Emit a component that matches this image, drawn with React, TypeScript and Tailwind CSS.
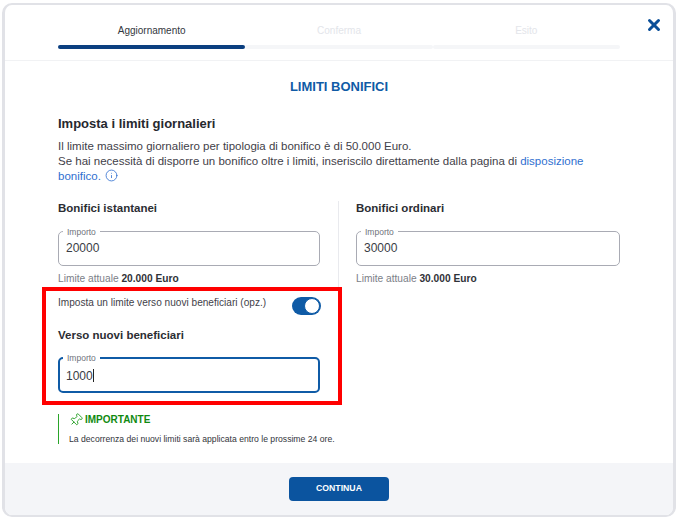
import { X, Pin, Info } from "lucide-react";

function Step({ label, active }: { label: string; active?: boolean }) {
  return (
    <div className="flex-1">
      <p className={`h-[24px] pt-[2px] text-center text-[10px] leading-[16px] ${active ? "text-[#333740]" : "text-[#e3e5ea]"}`}>
        {label}
      </p>
      <div className={`h-[4px] rounded-full ${active ? "bg-[#0b3f80]" : "bg-[#f5f6f8]"}`}></div>
    </div>
  );
}

function ImportoField({ value, focused }: { value: string; focused?: boolean }) {
  return (
    <div
      className={`relative rounded-[5px] bg-white ${
        focused ? "h-[36px] border-2 border-[#0f5ba6]" : "h-[35px] border border-[#a9abb4]"
      }`}
    >
      <span className={`absolute bg-white px-[4px] text-[8.5px] leading-[10px] text-[#6f727b] ${focused ? "-top-[6px] left-[3px]" : "-top-[5px] left-[4px]"}`}>
        Importo
      </span>
      <p className={`text-[12px] leading-[16px] text-[#3a3d45] ${focused ? "pl-[6px] pt-[8px]" : "pl-[7px] pt-[8px]"}`}>
        {value}
        {focused && <span className="ml-[0.5px] inline-block h-[13px] w-px translate-y-[2px] bg-[#222]"></span>}
      </p>
    </div>
  );
}

function LimiteAttuale({ value }: { value: string }) {
  return (
    <p className="mt-[6px] text-[10.2px] leading-[14px] text-[#7b7e87]">
      Limite attuale <b className="font-bold text-[#2f3138]">{value} Euro</b>
    </p>
  );
}

export default function App() {
  return (
    <div className="h-[518px] w-[677px] bg-white pl-[2px] pt-[3px] font-['Liberation_Sans',Arial,sans-serif]">
      <div className="relative flex h-[514px] w-[674px] flex-col overflow-hidden rounded-[10px] border-x-[3px] border-y-2 border-[#e1e2e7] bg-white">
        <div className="h-[56px] shrink-0 border-b border-[#f1f2f4]">
          <div className="ml-[53px] flex w-[562px] pt-[16px]">
            <Step label="Aggiornamento" active />
            <Step label="Conferma" />
            <Step label="Esito" />
          </div>
          <X className="absolute right-[10px] top-[11px] h-[18px] w-[18px] text-[#0b4f99]" strokeWidth={4} />
        </div>

        <div className="flex-1 px-[53px]">
          <h2 className="mt-[18px] text-center text-[13px] font-bold leading-[16px] text-[#0f5ba6]">LIMITI BONIFICI</h2>
          <h3 className="mt-[20px] text-[13px] font-bold leading-[18px] text-[#26282e]">Imposta i limiti giornalieri</h3>
          <p className="mt-[6px] text-[11.5px] leading-[15px] text-[#3f4149]">
            Il limite massimo giornaliero per tipologia di bonifico è di 50.000 Euro.
            <br />
            Se hai necessità di disporre un bonifico oltre i limiti, inseriscilo direttamente dalla pagina di{" "}
            <span className="text-[#2f6fd0]">disposizione bonifico.</span>
            <Info className="ml-[4px] inline-block h-[13px] w-[13px] -translate-y-[1px] text-[#2f6fd0]" strokeWidth={1.5} />
          </p>

          <div className="mt-[17px] flex">
            <div className="w-[280px] shrink-0 pr-[18px]">
              <h4 className="text-[11.5px] font-bold leading-[14px] text-[#2b2d33]">Bonifici istantanei</h4>
              <div className="mt-[16px]">
                <ImportoField value="20000" />
              </div>
              <LimiteAttuale value="20.000" />
              <div className="mt-[10px] flex h-[20px] items-center justify-between">
                <p className="-translate-y-[3px] text-[10.1px] leading-[14px] text-[#3f4149]">Imposta un limite verso nuovi beneficiari (opz.)</p>
                <div className="-mr-px flex h-[18px] w-[29px] items-center justify-end rounded-full bg-[#0f5ba6] pr-px">
                  <div className="h-[16px] w-[16px] rounded-full border border-[#0f5ba6] bg-white"></div>
                </div>
              </div>
              <h4 className="mt-[12px] text-[11.5px] font-bold leading-[14px] text-[#2b2d33]">Verso nuovi beneficiari</h4>
              <div className="mt-[15px]">
                <ImportoField value="1000" focused />
              </div>
            </div>
            <div className="h-[88px] w-[282px] border-l border-[#e9eaee] pl-[17px]">
              <h4 className="text-[11.5px] font-bold leading-[14px] text-[#2b2d33]">Bonifici ordinari</h4>
              <div className="mt-[16px]">
                <ImportoField value="30000" />
              </div>
              <LimiteAttuale value="30.000" />
            </div>
          </div>

          <div className="mt-[21px] h-[30px] border-l border-[#2aa52a] pl-[10px]">
            <div className="flex h-[11px] items-center gap-[2px]">
              <Pin className="h-[14px] w-[14px] shrink-0 rotate-45 text-[#1f9d1f]" strokeWidth={1.5} />
              <span className="text-[10px] font-bold leading-[13px] text-[#118a11]">IMPORTANTE</span>
            </div>
            <p className="mt-[8px] text-[8.65px] leading-[12px] text-[#33353b]">
              La decorrenza dei nuovi limiti sarà applicata entro le prossime 24 ore.
            </p>
          </div>
        </div>

        <div className="flex h-[52px] shrink-0 items-center justify-center bg-[#f4f5f8]">
          <button className="h-[24px] w-[100px] rounded-[4px] bg-[#0b549f] text-[8.7px] font-bold text-white">CONTINUA</button>
        </div>

        <div className="absolute left-[37px] top-[282px] h-[118px] w-[300px] border-[4px] border-[#ff0000]"></div>
      </div>
    </div>
  );
}
